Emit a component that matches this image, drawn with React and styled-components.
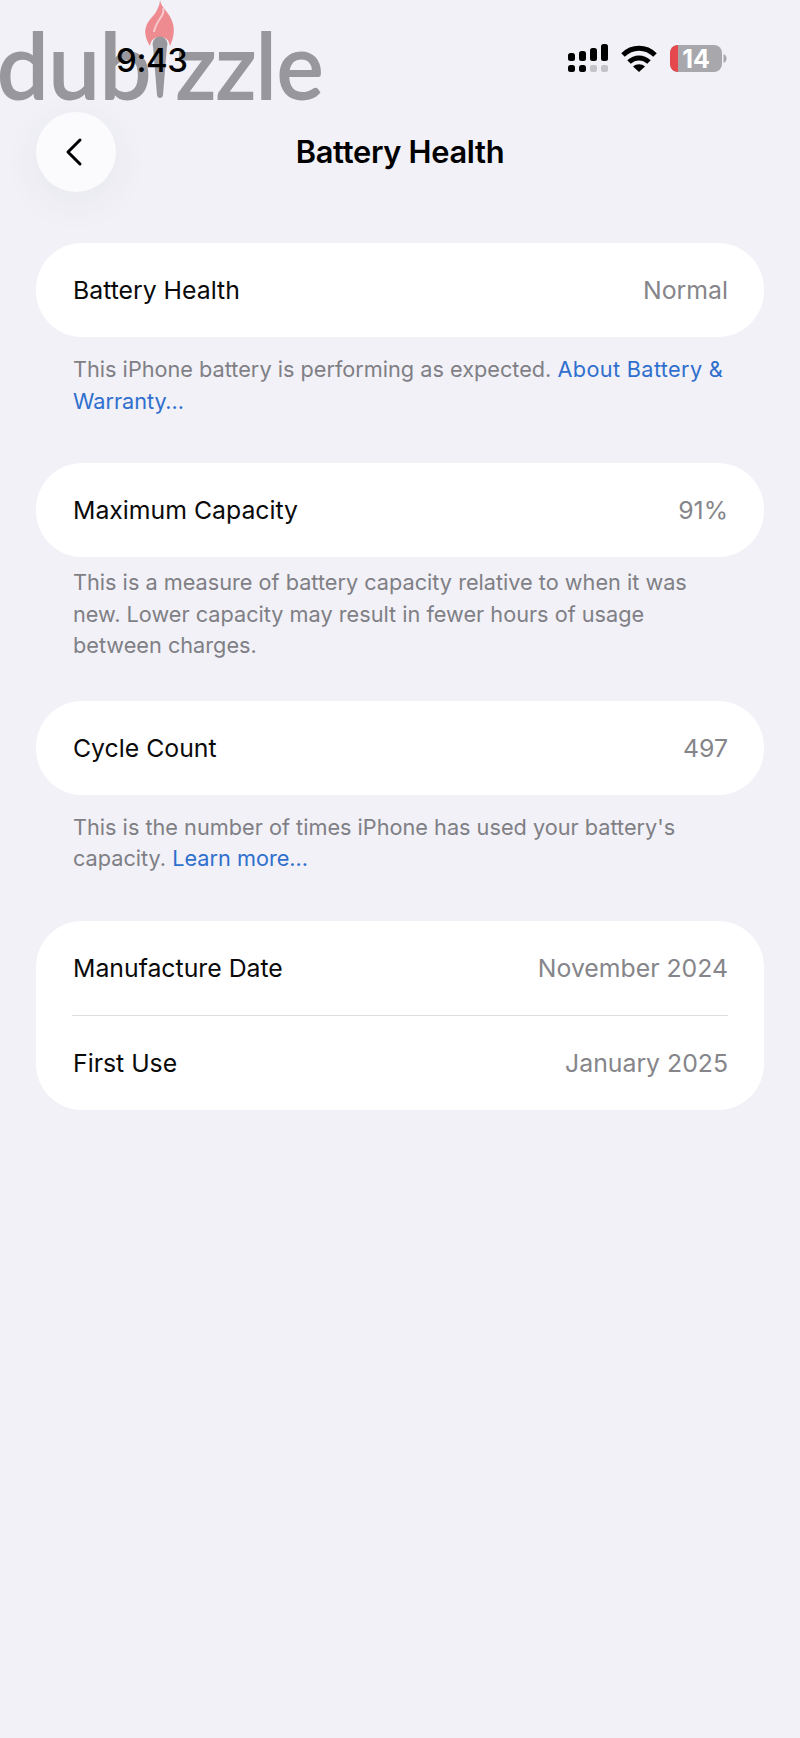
import React from "react";
import styled, { createGlobalStyle } from "styled-components";

const Global = createGlobalStyle`
  html, body { margin: 0; padding: 0; background: #f1f1f7; }
  body { font-family: Inter, "Liberation Sans", sans-serif; -webkit-font-smoothing: antialiased; }
`;

const Page = styled.div`
  position: relative;
  width: 800px;
  height: 1738px;
  overflow: hidden;
  background: #f1f1f7;
  color: #000;
`;

const Watermark = styled.div`
  position: absolute;
  left: -3px;
  top: 9px;
  height: 110px;
  display: flex;
  align-items: flex-start;
  font-family: Lato, sans-serif;
  font-weight: 400;
  font-size: 92px;
  line-height: 110px;
  color: #97979d;
  -webkit-text-stroke: 2px #97979d;
`;

const WatermarkPart = styled.span`
  display: block;
  transform-origin: left center;
  transform: scaleX(${(p) => p.$squeeze || 1});
`;

const Torch = styled.svg`
  display: block;
  flex: none;
  width: 30px;
  height: 104px;
  margin: -9px 1px 0 -6px;
`;

const StatusBar = styled.div`
  position: relative;
  height: 112px;
  box-sizing: border-box;
  padding: 42px 74px 0 116px;
  display: flex;
  justify-content: space-between;
  align-items: flex-start;
`;

const Time = styled.div`
  font-size: 33px;
  line-height: 36px;
  font-weight: 500;
  letter-spacing: -0.4px;
`;

const StatusIcons = styled.svg`
  display: block;
  width: 160px;
  height: 30px;
  margin-top: 2px;
  overflow: visible;
`;

const Header = styled.header`
  position: relative;
  height: 80px;
  padding: 0 36px;
  display: flex;
  align-items: center;
  justify-content: center;
`;

const BackButton = styled.button`
  position: absolute;
  left: 36px;
  top: 0;
  width: 80px;
  height: 80px;
  padding: 0 4px 0 0;
  border: 0;
  border-radius: 50%;
  background: #fbfbfe;
  box-shadow: 0 10px 40px rgba(60, 60, 90, 0.06);
  display: flex;
  align-items: center;
  justify-content: center;
`;

const Title = styled.h1`
  margin: 0;
  font-size: 30.8px;
  line-height: 36px;
  font-weight: 600;
  letter-spacing: -0.3px;
`;

const Content = styled.main`
  padding: 51px 36px 0;
  display: flex;
  flex-direction: column;
`;

const Section = styled.section`
  margin-bottom: ${(p) => p.$gap}px;
`;

const Card = styled.div`
  background: #fff;
  border-radius: 46px;
  overflow: hidden;
`;

const Row = styled.div`
  height: 94px;
  box-sizing: border-box;
  padding: 0 36px 0 37px;
  display: flex;
  align-items: center;
  justify-content: space-between;
  font-size: 24.8px;
`;

const Divider = styled.div`
  height: 1px;
  margin: 0 36px;
  background: #dcdce1;
`;

const Label = styled.span`
  color: #0a0a0a;
`;

const Value = styled.span`
  color: #85858a;
`;

const Note = styled.p`
  margin: ${(p) => p.$top}px 0 0;
  padding: 0 36px 0 37px;
  font-size: 21.7px;
  line-height: 31.5px;
  color: #7f7f85;
`;

const Anchor = styled.a`
  color: #2f6fce;
  text-decoration: none;
  letter-spacing: ${(p) => p.$spread || 0}px;
`;

export default function App() {
  return (
    <Page>
      <Global />
      <Watermark>
        <WatermarkPart>dub</WatermarkPart>
        <Torch viewBox="0 0 30 104">
          <path d="M15 0c1 8 10 12 13 24 2 8 0 15-3 22-1-6-4-9-10-9s-9 3-10 9C1 40-1 33 1 27c2-7 7-10 10-15 2-4 4-8 4-12z" fill="#ee8b90" />
          <path d="M18 8c3 7-7 12-9 24" stroke="#f7c9cb" strokeWidth="2" fill="none" />
          <circle cx="15" cy="44" r="7.500" fill="#97979d" />
          <path d="M8 46h14l-4 49c-.3 4-5.700 4-6 0z" fill="#97979d" />
        </Torch>
        <WatermarkPart $squeeze={0.96}>zzle</WatermarkPart>
      </Watermark>
      <StatusBar>
        <Time>9:43</Time>
        <StatusIcons viewBox="0 0 160 30">
          <g fill="#000">
            <rect x="2" y="9" width="7" height="8" rx="2.500" />
            <rect x="13" y="7" width="7" height="10" rx="2.500" />
            <rect x="24" y="4" width="7" height="13" rx="2.500" />
            <rect x="35" y="0" width="7" height="17" rx="2.500" />
            <rect x="2" y="21" width="7" height="7" rx="2.500" />
            <rect x="13" y="21" width="7" height="7" rx="2.500" />
          </g>
          <rect x="24" y="21" width="7" height="7" rx="2" fill="#c4c4c8" />
          <rect x="35" y="21" width="7" height="7" rx="2" fill="#c4c4c8" />
          <g fill="none" stroke="#000" strokeWidth="5">
            <path d="M57 11c9-9 23-9 32 0" />
            <path d="M63 18c6-5.500 14-5.500 20 0" />
          </g>
          <path d="M67 22.500c3.500-3 8.500-3 12 0l-6 5.500z" fill="#000" />
          <rect x="104" y="1" width="52" height="27" rx="8" fill="#a8a8ac" />
          <path d="M112 1c-4.400 0-8 3.600-8 8v11c0 4.400 3.600 8 8 8V1z" fill="#e5484d" />
          <path d="M157.500 10c2 .5 3 2.500 3 4.500s-1 4-3 4.500z" fill="#a8a8ac" />
          <text x="130" y="23.500" textAnchor="middle" fontFamily="Inter, sans-serif" fontSize="25" fontWeight="700" fill="#fff">14</text>
        </StatusIcons>
      </StatusBar>
      <Header>
        <BackButton aria-label="Back">
          <svg width="20" height="30" viewBox="0 0 20 30" fill="none" stroke="#000" strokeWidth="3" strokeLinecap="round" strokeLinejoin="round">
            <path d="M16 3 4 15l12 12" />
          </svg>
        </BackButton>
        <Title>Battery Health</Title>
      </Header>
      <Content>
        <Section $gap={46}>
          <Card>
            <Row><Label>Battery Health</Label><Value>Normal</Value></Row>
          </Card>
          <Note $top={17}>This iPhone battery is performing as expected. <Anchor $spread={0.35}>About Battery &amp;</Anchor> <Anchor>Warranty…</Anchor></Note>
        </Section>
        <Section $gap={39}>
          <Card>
            <Row><Label>Maximum Capacity</Label><Value>91%</Value></Row>
          </Card>
          <Note $top={10}>This is a measure of battery capacity relative to when it was new. Lower capacity may result in fewer hours of usage between charges.</Note>
        </Section>
        <Section $gap={46}>
          <Card>
            <Row><Label>Cycle Count</Label><Value>497</Value></Row>
          </Card>
          <Note $top={17}>This is the number of times iPhone has used your battery's capacity. <Anchor>Learn more…</Anchor></Note>
        </Section>
        <Section $gap={0}>
          <Card>
            <Row><Label>Manufacture Date</Label><Value>November 2024</Value></Row>
            <Divider />
            <Row><Label>First Use</Label><Value>January 2025</Value></Row>
          </Card>
        </Section>
      </Content>
    </Page>
  );
}
